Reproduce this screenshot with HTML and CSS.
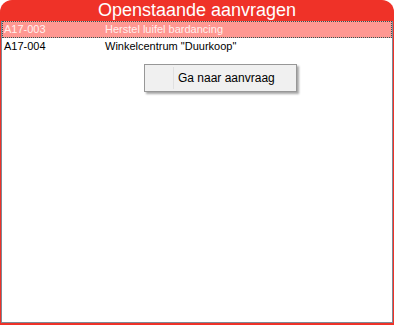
FILE: index.html
```html
<!DOCTYPE html>
<html lang="nl">
<head>
    <meta charset="UTF-8">
    <title>Openstaande aanvragen</title>
    <link rel="stylesheet" href="styles.css">
</head>
<body>
    <div class="panel">
        <div class="header">Openstaande aanvragen</div>
        <div class="list">
            <div class="row selected">
                <span class="code">A17-003</span>
                <span class="name">Herstel luifel bardancing</span>
            </div>
            <div class="row">
                <span class="code">A17-004</span>
                <span class="name">Winkelcentrum "Duurkoop"</span>
            </div>
        </div>
    </div>

    <div class="menu">
        <div class="menu-icon"></div>
        <div class="menu-item">Ga naar aanvraag</div>
    </div>
</body>
</html>
```

FILE: styles.css
```css
body {
    margin: 0;
    width: 394px;
    height: 325px;
    overflow: hidden;
    font-family: 'Liberation Sans', Arial, sans-serif;
    font-size: 11px;
    background: #ffffff;
}
.panel {
    box-sizing: border-box;
    height: 325px;
    display: flex;
    flex-direction: column;
    background: #ef3228;
    border-radius: 12px 12px 0 0;
    padding: 0 1px 2px 1px;
}
.header {
    height: 21px;
    line-height: 21px;
    text-align: center;
    color: #ffffff;
    font-size: 18px;
}
.list {
    flex: 1;
    background: #ffffff;
    border: 1px solid #7d8a96;
    border-top: none;
}
.row {
    display: flex;
    height: 17px;
    line-height: 17px;
    padding-left: 2px;
    color: #000000;
    box-sizing: border-box;
}
.row.selected {
    background: #ff9892;
    color: #fff0ee;
    outline: 1px dotted #2d5a5a;
    outline-offset: -1px;
}
.code {
    width: 101px;
}
.menu {
    position: absolute;
    left: 144px;
    top: 64px;
    width: 151px;
    height: 26px;
    display: flex;
    background: #f0f0f0;
    border: 1px solid #979797;
    box-shadow: 2px 2px 2px rgba(0, 0, 0, 0.35);
}
.menu-icon {
    width: 28px;
    border-right: 1px solid #e0e0e0;
    margin: 2px 0;
}
.menu-item {
    padding-left: 4px;
    line-height: 26px;
    color: #000000;
    font-size: 12px;
}
```
